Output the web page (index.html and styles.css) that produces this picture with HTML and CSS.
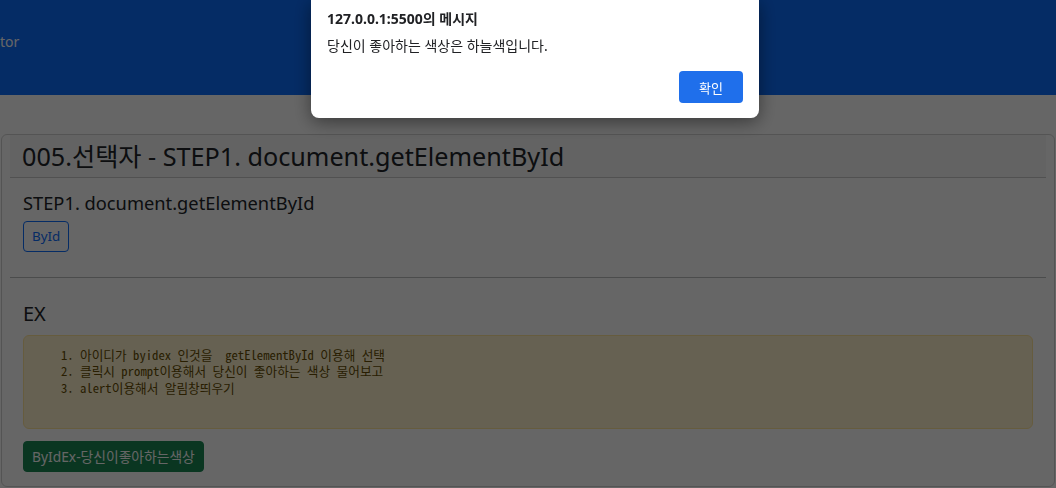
FILE: index.html
```html
<!DOCTYPE html>
<html lang="ko">
<head>
<meta charset="utf-8">
<title>005.선택자 - STEP1</title>
<link rel="stylesheet" href="styles.css">
</head>
<body>
<header class="topbar"><span class="brand-tail">tor</span></header>
<main class="page">
  <section class="card">
    <div class="card-header"><h3 class="card-title">005.선택자 - STEP1. document.getElementById</h3></div>
    <div class="card-body step">
      <h5 class="step-title">STEP1. document.getElementById</h5>
      <button class="btn btn-outline-primary" type="button">ById</button>
    </div>
    <hr class="divider">
    <div class="card-body ex">
      <h4 class="ex-title">EX</h4>
      <div class="alert-warning">
        <ol class="task-list">
          <li>아이디가 byidex 인것을  getElementById 이용해 선택</li>
          <li>클릭시 prompt이용해서 당신이 좋아하는 색상 물어보고</li>
          <li>alert이용해서 알림창띄우기</li>
        </ol>
      </div>
      <button class="btn btn-success" type="button">ByIdEx-당신이좋아하는색상</button>
    </div>
  </section>
</main>
<div class="backdrop"></div>
<div class="dialog" role="alertdialog">
  <div class="dialog-title">127.0.0.1:5500의 메시지</div>
  <div class="dialog-msg">당신이 좋아하는 색상은 하늘색입니다.</div>
  <div class="dialog-actions"><button class="dialog-ok" type="button">확인</button></div>
</div>
</body>
</html>
```

FILE: styles.css
```css
* { box-sizing: border-box; }

html, body {
  margin: 0;
  height: 488px;
  overflow: hidden;
}

body {
  background: #fff;
  color: #212529;
  font-family: "Noto Sans", "Noto Sans CJK KR", sans-serif;
}

.topbar {
  height: 95px;
  background: #0d6efd;
  padding-top: 33px;
}

.brand-tail {
  display: block;
  color: #ffffff;
  font-size: 14px;
  line-height: 18px;
}

.page {
  padding: 39px 1px 0;
}

.card {
  border: 1px solid rgba(0, 0, 0, 0.175);
  border-radius: 6px;
  padding: 0 8px;
}

.card-header {
  background: rgba(0, 0, 0, 0.03);
  border-bottom: 1px solid rgba(0, 0, 0, 0.175);
  padding: 5px 12px;
}

.card-title {
  margin: 0;
  font-size: 25.2px;
  line-height: 32.4px;
  font-weight: 400;
}

.card-body {
  display: flex;
  flex-direction: column;
  align-items: flex-start;
}

.step {
  padding: 13px 13px 25px;
}

.step-title {
  margin: 0 0 6px;
  font-size: 18.3px;
  line-height: 24px;
  font-weight: 400;
}

.divider {
  margin: 0;
  border: 0;
  border-top: 1px solid rgba(33, 37, 41, 0.3);
}

.ex {
  padding: 23px 13px 14px;
}

.ex-title {
  margin: 0 0 7px;
  font-size: 20px;
  line-height: 26.4px;
  font-weight: 400;
}

.btn {
  font-family: "Noto Sans", "Noto Sans CJK KR", sans-serif;
  font-size: 13.4px;
  line-height: 21px;
  padding: 4px 8px;
  border: 1px solid transparent;
  border-radius: 4px;
  background: transparent;
}

.btn-outline-primary {
  color: #0d6efd;
  border-color: #0d6efd;
}

.btn-success {
  color: #fff;
  background: #198754;
  border-color: #198754;
  font-size: 13.8px;
}

.alert-warning {
  align-self: stretch;
  background: #fff3cd;
  border: 1px solid #ffe69c;
  border-radius: 6px;
  color: #664d03;
  padding: 11px 16px 16px;
  margin-bottom: 12px;
}

.task-list {
  margin: 0 0 16px;
  padding-left: 40px;
  font-family: "Noto Sans Mono CJK KR", "Noto Sans Mono CJK SC", "DejaVu Sans Mono", monospace;
  font-size: 12.7px;
  line-height: 16.5px;
}

.task-list li {
  white-space: pre-wrap;
}

.backdrop {
  position: fixed;
  inset: 0;
  background: rgba(0, 0, 0, 0.6);
}

.dialog {
  position: fixed;
  top: 0;
  left: 311px;
  width: 448px;
  background: #fff;
  border-radius: 0 0 8px 8px;
  box-shadow: 0 4px 18px rgba(0, 0, 0, 0.45);
  padding: 9px 16px 15px;
  color: #202124;
  font-family: "Noto Sans", "Noto Sans CJK KR", sans-serif;
}

.dialog-title {
  font-size: 14px;
  line-height: 20px;
  font-weight: 700;
}

.dialog-msg {
  margin-top: 7px;
  font-size: 14px;
  line-height: 20px;
}

.dialog-actions {
  display: flex;
  justify-content: flex-end;
  margin-top: 15px;
}

.dialog-ok {
  width: 64px;
  height: 32px;
  border: 0;
  border-radius: 4px;
  background: #1f6feb;
  color: #fff;
  font-family: "Noto Sans", "Noto Sans CJK KR", sans-serif;
  font-size: 13px;
}
```
